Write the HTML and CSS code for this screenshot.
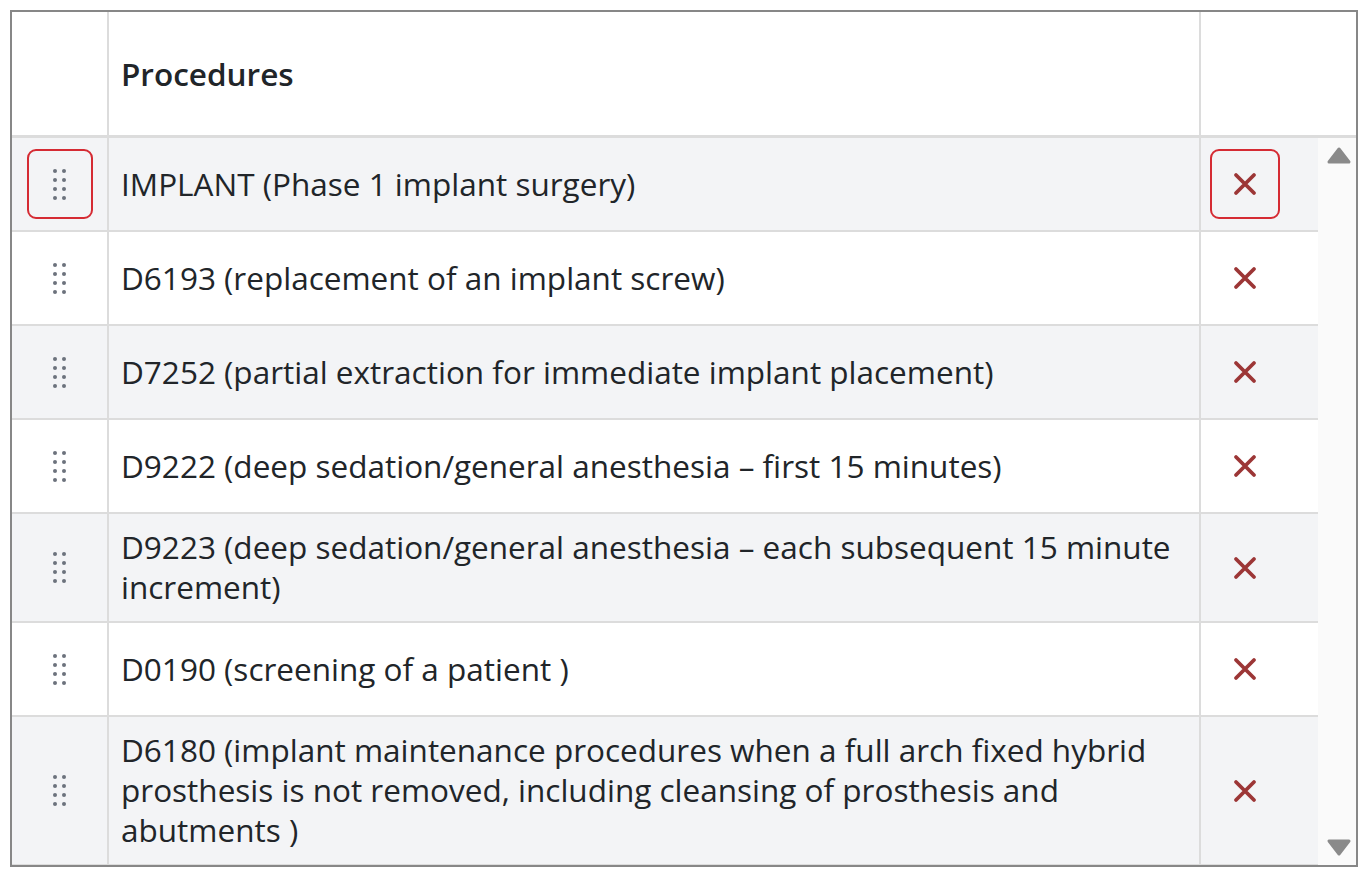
FILE: index.html
```html
<!DOCTYPE html>
<html lang="en">
<head>
<meta charset="utf-8">
<title>Procedures</title>
<link rel="stylesheet" href="styles.css">
</head>
<body>
<div class="grid-box">
  <div class="head">
    <div class="hcell hcell-handle"></div>
    <div class="hcell hcell-title">Procedures</div>
    <div class="hcell hcell-action"></div>
  </div>
  <div class="body">
    <div class="rows">
      <div class="row alt">
        <div class="cell cell-handle"><button class="handle focused" aria-label="Drag"><span class="dots"><i></i><i></i><i></i><i></i><i></i><i></i><i></i><i></i></span></button></div>
        <div class="cell cell-text">IMPLANT (Phase 1 implant surgery)</div>
        <div class="cell cell-action"><button class="remove focused" aria-label="Remove"><svg viewBox="0 0 24 24" width="24" height="24"><path d="M3 3 L21 21 M21 3 L3 21"/></svg></button></div>
      </div>
      <div class="row">
        <div class="cell cell-handle"><button class="handle" aria-label="Drag"><span class="dots"><i></i><i></i><i></i><i></i><i></i><i></i><i></i><i></i></span></button></div>
        <div class="cell cell-text">D6193 (replacement of an implant screw)</div>
        <div class="cell cell-action"><button class="remove" aria-label="Remove"><svg viewBox="0 0 24 24" width="24" height="24"><path d="M3 3 L21 21 M21 3 L3 21"/></svg></button></div>
      </div>
      <div class="row alt">
        <div class="cell cell-handle"><button class="handle" aria-label="Drag"><span class="dots"><i></i><i></i><i></i><i></i><i></i><i></i><i></i><i></i></span></button></div>
        <div class="cell cell-text">D7252 (partial extraction for immediate implant placement)</div>
        <div class="cell cell-action"><button class="remove" aria-label="Remove"><svg viewBox="0 0 24 24" width="24" height="24"><path d="M3 3 L21 21 M21 3 L3 21"/></svg></button></div>
      </div>
      <div class="row">
        <div class="cell cell-handle"><button class="handle" aria-label="Drag"><span class="dots"><i></i><i></i><i></i><i></i><i></i><i></i><i></i><i></i></span></button></div>
        <div class="cell cell-text">D9222 (deep sedation/general anesthesia – first 15 minutes)</div>
        <div class="cell cell-action"><button class="remove" aria-label="Remove"><svg viewBox="0 0 24 24" width="24" height="24"><path d="M3 3 L21 21 M21 3 L3 21"/></svg></button></div>
      </div>
      <div class="row alt">
        <div class="cell cell-handle"><button class="handle" aria-label="Drag"><span class="dots"><i></i><i></i><i></i><i></i><i></i><i></i><i></i><i></i></span></button></div>
        <div class="cell cell-text">D9223 (deep sedation/general anesthesia – each subsequent 15 minute increment)</div>
        <div class="cell cell-action"><button class="remove" aria-label="Remove"><svg viewBox="0 0 24 24" width="24" height="24"><path d="M3 3 L21 21 M21 3 L3 21"/></svg></button></div>
      </div>
      <div class="row">
        <div class="cell cell-handle"><button class="handle" aria-label="Drag"><span class="dots"><i></i><i></i><i></i><i></i><i></i><i></i><i></i><i></i></span></button></div>
        <div class="cell cell-text">D0190 (screening of a patient )</div>
        <div class="cell cell-action"><button class="remove" aria-label="Remove"><svg viewBox="0 0 24 24" width="24" height="24"><path d="M3 3 L21 21 M21 3 L3 21"/></svg></button></div>
      </div>
      <div class="row alt">
        <div class="cell cell-handle"><button class="handle" aria-label="Drag"><span class="dots"><i></i><i></i><i></i><i></i><i></i><i></i><i></i><i></i></span></button></div>
        <div class="cell cell-text">D6180 (implant maintenance procedures when a full arch fixed hybrid prosthesis is not removed, including cleansing of prosthesis and abutments )</div>
        <div class="cell cell-action"><button class="remove" aria-label="Remove"><svg viewBox="0 0 24 24" width="24" height="24"><path d="M3 3 L21 21 M21 3 L3 21"/></svg></button></div>
      </div>
    </div>
    <div class="scrollbar">
      <svg class="arrow" viewBox="0 0 26 20" width="26" height="20"><path d="M13 3 L23 16 L3 16 Z"/></svg>
      <svg class="arrow" viewBox="0 0 26 20" width="26" height="20"><path d="M3 4 L23 4 L13 17 Z"/></svg>
    </div>
  </div>
</div>
</body>
</html>
```

FILE: styles.css
```css
* { box-sizing: border-box; }

html, body {
  margin: 0;
  padding: 0;
  background: #ffffff;
}

body {
  padding: 10px;
  font-family: "Open Sans", "Noto Sans", sans-serif;
  color: #212529;
}

.grid-box {
  width: 1348px;
  height: 857px;
  border: 2px solid #878787;
  display: flex;
  flex-direction: column;
  overflow: hidden;
  background: #ffffff;
}

.head {
  display: grid;
  grid-template-columns: 97px 1092px 1fr;
  height: 126px;
  flex: none;
  border-bottom: 3px solid #dcdcdc;
}

.hcell {
  display: flex;
  align-items: center;
}

.hcell-handle,
.hcell-title {
  border-right: 2px solid #dcdcdc;
}

.hcell-title {
  padding-left: 12px;
  font-size: 31.5px;
  font-weight: 600;
}

.body {
  flex: 1;
  display: flex;
  min-height: 0;
}

.rows {
  width: 1306px;
  flex: none;
  overflow: hidden;
}

.row {
  display: grid;
  grid-template-columns: 97px 1092px 1fr;
  border-bottom: 2px solid #dcdcdc;
  background: #ffffff;
}

.row.alt {
  background: #f3f4f6;
}

.cell {
  padding: 13px 0;
  display: flex;
  align-items: center;
}

.cell-handle {
  border-right: 2px solid #dcdcdc;
  justify-content: center;
}

.cell-text {
  border-right: 2px solid #dcdcdc;
  padding: 13px 12px 14px 12px;
  font-size: 31.5px;
  line-height: 40px;
}

.cell-action {
  padding-left: 11px;
}

.handle,
.remove {
  background: transparent;
  border: 0;
  padding: 0;
  margin: 0;
  height: 66px;
  border-radius: 7px;
  display: flex;
  align-items: center;
  justify-content: center;
}

.handle { width: 62px; }
.remove { width: 66px; }

.focused {
  outline: 2px solid #d52b33;
  outline-offset: 0;
}

.dots {
  display: grid;
  grid-template-columns: 4px 4px;
  column-gap: 5px;
  row-gap: 5px;
}

.dots i {
  width: 4px;
  height: 4px;
  border-radius: 50%;
  background: #6c727c;
  display: block;
}

.remove svg {
  fill: none;
  stroke: #9c3636;
  stroke-width: 3.8;
  stroke-linecap: round;
}

.scrollbar {
  flex: 1;
  background: #fafafa;
  display: flex;
  flex-direction: column;
  justify-content: space-between;
  align-items: center;
  padding: 8px 0 8px 3px;
}

.arrow path {
  fill: #8a8a8a;
  stroke: #8a8a8a;
  stroke-width: 3;
  stroke-linejoin: round;
}
```
